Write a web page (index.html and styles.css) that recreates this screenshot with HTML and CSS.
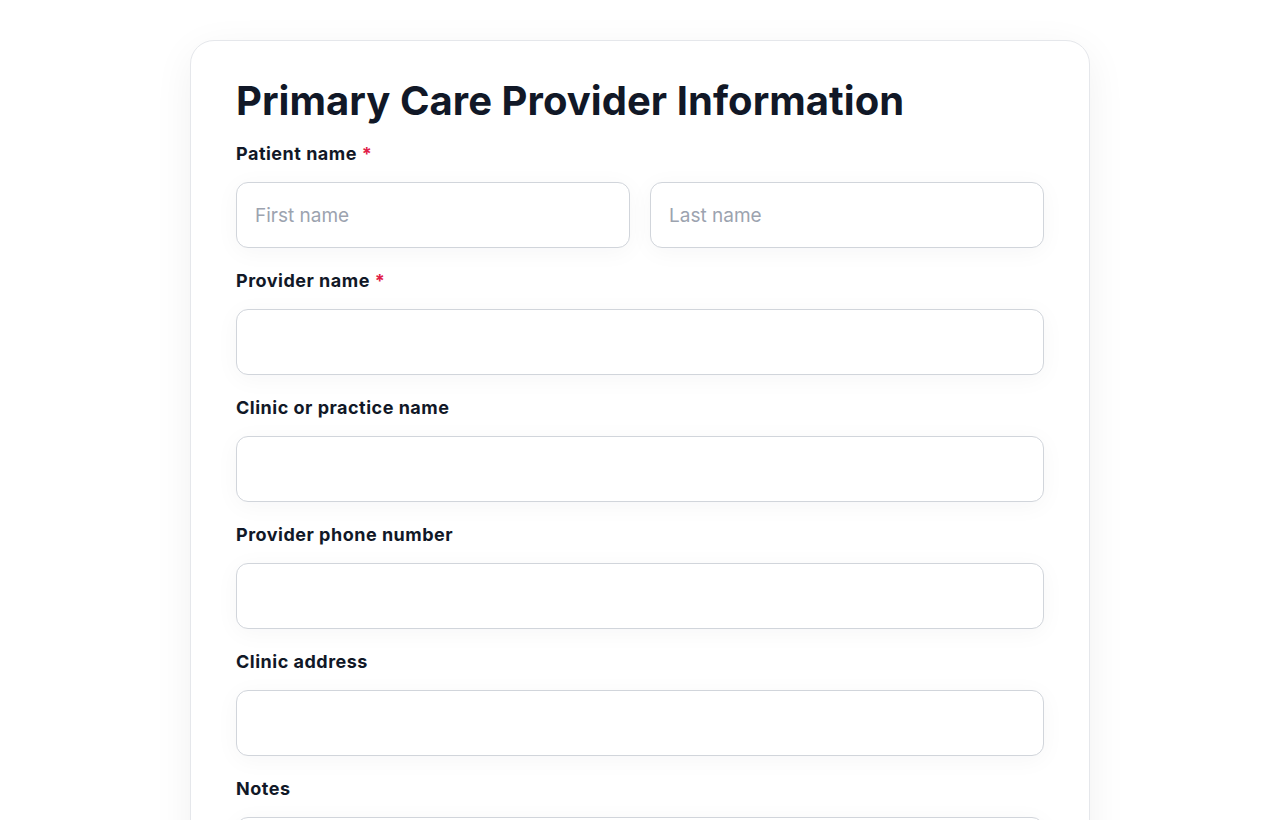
FILE: index.html
```html
<!DOCTYPE html>
<html lang="en">
<head>
	<meta charset="UTF-8">
	<title>Primary Care Provider Information</title>
	<link rel="stylesheet" href="styles.css">
</head>
<body>
	<div class="page">
		<form class="card">
			<h1>Primary Care Provider Information</h1>
			<div class="field">
				<label>Patient name <span class="req">*</span></label>
				<div class="row">
					<input type="text" placeholder="First name">
					<input type="text" placeholder="Last name">
				</div>
			</div>
			<div class="field">
				<label>Provider name <span class="req">*</span></label>
				<input type="text">
			</div>
			<div class="field">
				<label>Clinic or practice name</label>
				<input type="text">
			</div>
			<div class="field">
				<label>Provider phone number</label>
				<input type="tel">
			</div>
			<div class="field">
				<label>Clinic address</label>
				<input type="text">
			</div>
			<div class="field">
				<label>Notes</label>
				<textarea rows="4"></textarea>
			</div>
		</form>
	</div>
</body>
</html>
```

FILE: styles.css
```css
* { margin: 0; padding: 0; box-sizing: border-box; }
body {
	background: #fff;
	font-family: Inter, "Noto Sans", sans-serif;
	color: #111827;
}
.page {
	display: flex;
	justify-content: center;
	padding-top: 40px;
}
.card {
	width: 900px;
	background: #fff;
	border: 1px solid #e5e7eb;
	border-radius: 24px;
	padding: 36px 45px 45px;
	box-shadow: 0 10px 40px rgba(17, 24, 39, .06);
}
.card h1 {
	font-size: 40px;
	line-height: 48px;
	font-weight: 700;
	letter-spacing: .05px;
	margin-bottom: 17px;
}
.field {
	display: flex;
	flex-direction: column;
	margin-bottom: 21px;
}
.field label {
	font-size: 18px;
	line-height: 24px;
	font-weight: 700;
	letter-spacing: .5px;
	margin-bottom: 16px;
}
.field .req {
	color: #e11d48;
}
.row {
	display: flex;
	gap: 20px;
}
.row input {
	flex: 1;
	min-width: 0;
}
.field input,
.field textarea {
	height: 66px;
	border: 1px solid #d1d5db;
	border-radius: 12px;
	padding: 0 18px;
	font: 19px Inter, "Noto Sans", sans-serif;
	color: #111827;
	background: #fff;
	box-shadow: 0 4px 24px rgba(17, 24, 39, .04);
	outline: none;
}
.field textarea {
	height: 130px;
	padding: 18px;
	resize: none;
}
.field input::placeholder {
	color: #9ca3af;
}
```
